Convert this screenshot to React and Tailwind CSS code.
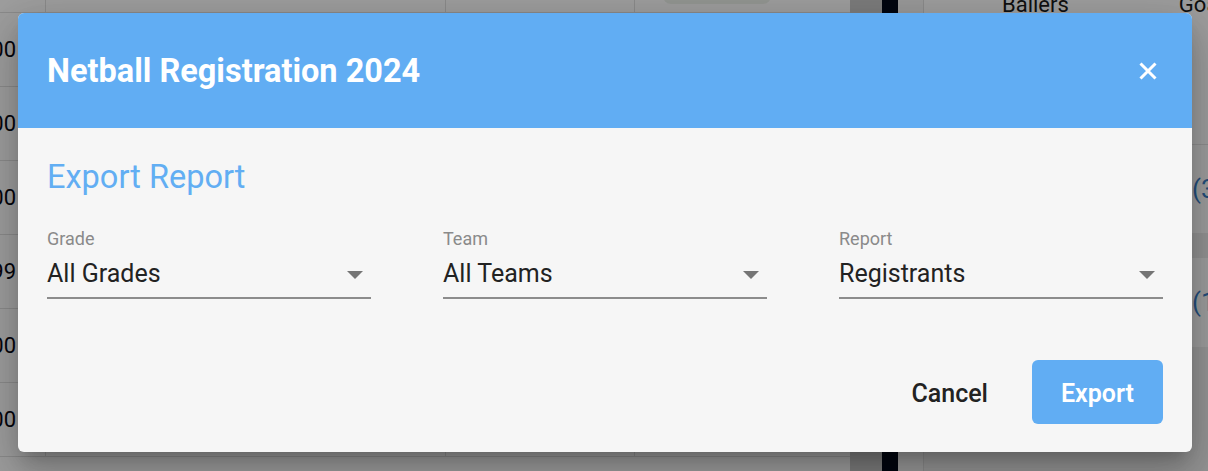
import React from "react";

function Caret() {
  return (
    <svg width="16" height="8" viewBox="0 0 16 8" className="mt-[1px] shrink-0">
      <path d="M0 0 L16 0 L8 8 Z" fill="#757575" />
    </svg>
  );
}

function Field({ label, value }) {
  return (
    <div className="flex flex-col">
      <span className="text-[18px] leading-[22px] text-[#8a8a8a]">{label}</span>
      <div className="mt-[9px] flex items-center justify-between border-b-2 border-[#8c8c8c] pb-[8px] pr-[8px]">
        <span className="text-[25px] leading-[30px] text-[#222222]">{value}</span>
        <Caret />
      </div>
    </div>
  );
}

const leftRows = ["100", "100", "100", "099", "100", "100"];

export default function App() {
  return (
    <div
      className="relative w-[1208px] h-[471px] overflow-hidden bg-white"
      style={{ fontFamily: "Roboto, 'Noto Sans', Arial, sans-serif" }}
    >
      {/* background page */}
      <div className="flex h-full w-full">
        <div className="flex w-[850px] shrink-0 flex-col">
          <div className="flex h-[13px] shrink-0 border-b border-[#e0e0e0]">
            <div className="w-[46px] shrink-0 border-r border-[#e0e0e0]" />
            <div className="w-[400px] shrink-0 border-r border-[#e0e0e0]" />
            <div className="w-[189px] shrink-0 border-r border-[#e0e0e0]" />
            <div className="flex flex-1 justify-start pl-[28px]">
              <div className="-mt-[4px] h-[8px] w-[108px] rounded-b-[12px] bg-[#eef2ec]" />
            </div>
          </div>
          {leftRows.map((t, i) => (
            <div key={i} className="flex h-[74px] shrink-0 border-b border-[#e0e0e0]">
              <div className="flex w-[46px] shrink-0 items-center justify-end border-r border-[#e0e0e0] pr-[29px] text-[22px] text-[#0a0a14]">
                {t}
              </div>
              <div className="w-[400px] shrink-0 border-r border-[#e0e0e0]" />
              <div className="w-[189px] shrink-0 border-r border-[#e0e0e0]" />
              <div className="flex-1" />
            </div>
          ))}
        </div>
        <div className="w-[32px] shrink-0 bg-[#c8c8c8]" />
        <div className="w-[16px] shrink-0 bg-[#020b1a]" />
        <div className="w-[26px] shrink-0 border-r border-[#e0e0e0] bg-[#f7f7f7]" />
        <div className="flex min-w-0 flex-1 flex-col bg-[#f7f7f7]">
          <div className="flex h-[145px] shrink-0 items-start whitespace-nowrap border-b border-[#e6e6e6] bg-white text-[22px] leading-[22px] text-[#1a1a1a]">
            <span className="-mt-[6px] ml-[78px]">Ballers</span>
            <span className="-mt-[6px] ml-[110px]">Goals</span>
          </div>
          <div className="flex h-[88px] shrink-0 items-center whitespace-nowrap bg-white pl-[268px] text-[26px] text-[#3a7fc8]">(3)</div>
          <div className="h-[25px] shrink-0 bg-[#eeeeee]" />
          <div className="flex h-[89px] shrink-0 items-center whitespace-nowrap bg-white pl-[268px] text-[26px] text-[#3a7fc8]">(1)</div>
          <div className="flex-1 bg-[#f0f0f0]" />
        </div>
      </div>

      {/* overlay */}
      <div className="absolute inset-0 flex items-start justify-start bg-black/[0.38] pl-[18px] pt-[13px]">
        <div className="flex h-[439px] w-[1174px] flex-col overflow-hidden rounded-[6px] bg-[#f6f6f6] shadow-[0_11px_15px_-7px_rgba(0,0,0,0.2),0_24px_38px_3px_rgba(0,0,0,0.14),0_9px_46px_8px_rgba(0,0,0,0.12)]">
          <div className="flex h-[115px] shrink-0 items-center justify-between bg-[#61adf3] pl-[29px] pr-[30px]">
            <h2 className="text-[32.5px] font-bold leading-[38px] text-white">Netball Registration 2024</h2>
            <button className="flex h-[28px] w-[28px] items-center justify-center">
              <svg width="18" height="18" viewBox="0 0 18 18">
                <path d="M1.5 1.5 L16.5 16.5 M16.5 1.5 L1.5 16.5" stroke="white" strokeWidth="3" />
              </svg>
            </button>
          </div>
          <div className="flex flex-1 flex-col px-[29px] pt-[30px] pb-[28px]">
            <h3 className="text-[32.5px] leading-[38px] text-[#62aef3]">Export Report</h3>
            <div className="mt-[32px] grid grid-cols-3 gap-x-[72px]">
              <Field label="Grade" value="All Grades" />
              <Field label="Team" value="All Teams" />
              <Field label="Report" value="Registrants" />
            </div>
            <div className="mt-auto flex items-center justify-end gap-[24px]">
              <button className="px-[20px] pt-[3px] text-[25px] font-medium leading-[30px] text-[#222222]">Cancel</button>
              <button className="h-[64px] w-[131px] rounded-[6px] bg-[#61adf3] pt-[4px] text-[25px] font-semibold leading-[30px] text-white">
                Export
              </button>
            </div>
          </div>
        </div>
      </div>
    </div>
  );
}
